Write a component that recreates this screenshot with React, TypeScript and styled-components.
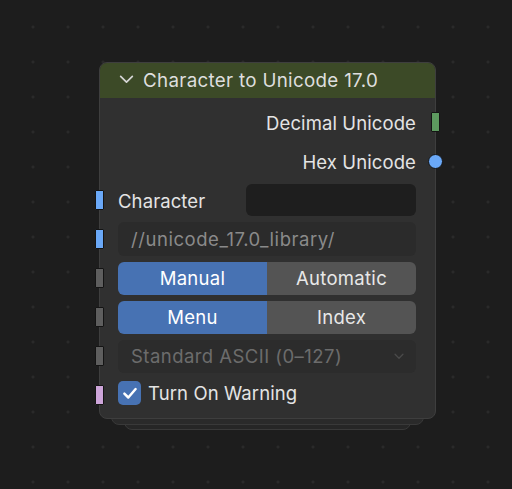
import styled, {createGlobalStyle} from "styled-components";

const GlobalStyle = createGlobalStyle`
    html, body {
        margin: 0;
        padding: 0;
        background: #1d1d1d;
    }
    * {
        box-sizing: border-box;
    }
`;

type SocketKind = 'blue' | 'gray' | 'pink' | 'green';

const socketColors: Record<SocketKind, string> = {
    blue: '#6aa8f7',
    gray: '#5e5e5e',
    pink: '#cda5d9',
    green: '#5d9a5f',
};

export default function App() {
    return (
        <>
            <GlobalStyle/>
            <Canvas>
                <Node>
                    <Header>
                        <Chevron viewBox="0 0 16 16">
                            <path d="M2.5 5 L8 10.5 L13.5 5" fill="none" stroke="#d6d6d6" strokeWidth="1.6"
                                  strokeLinecap="round" strokeLinejoin="round"/>
                        </Chevron>
                        <Title>Character to Unicode 17.0</Title>
                    </Header>
                    <Body>
                        <OutputRow>
                            <Label>Decimal Unicode</Label>
                            <RightSocket $kind="green"/>
                        </OutputRow>
                        <OutputRow>
                            <Label>Hex Unicode</Label>
                            <RoundSocket/>
                        </OutputRow>
                        <Row>
                            <LeftSocket $kind="blue"/>
                            <Label>Character</Label>
                            <TextInput/>
                        </Row>
                        <Row>
                            <LeftSocket $kind="blue"/>
                            <PathField>//unicode_17.0_library/</PathField>
                        </Row>
                        <Row>
                            <LeftSocket $kind="gray"/>
                            <Segmented>
                                <Segment $active>Manual</Segment>
                                <Segment>Automatic</Segment>
                            </Segmented>
                        </Row>
                        <Row>
                            <LeftSocket $kind="gray"/>
                            <Segmented>
                                <Segment $active>Menu</Segment>
                                <Segment>Index</Segment>
                            </Segmented>
                        </Row>
                        <Row>
                            <LeftSocket $kind="gray"/>
                            <Dropdown>
                                <span>Standard ASCII (0–127)</span>
                                <svg width="14" height="14" viewBox="0 0 16 16">
                                    <path d="M3.5 6 L8 10.5 L12.5 6" fill="none" stroke="#4a4a4a" strokeWidth="1.5"
                                          strokeLinecap="round" strokeLinejoin="round"/>
                                </svg>
                            </Dropdown>
                        </Row>
                        <Row>
                            <LeftSocket $kind="pink"/>
                            <Checkbox>
                                <svg width="18" height="18" viewBox="0 0 16 16">
                                    <path d="M3 8.5 L6.5 12 L13 4.5" fill="none" stroke="#ffffff" strokeWidth="2.2"
                                          strokeLinecap="round" strokeLinejoin="round"/>
                                </svg>
                            </Checkbox>
                            <CheckLabel>Turn On Warning</CheckLabel>
                        </Row>
                    </Body>
                </Node>
            </Canvas>
        </>
    );
}

const Canvas = styled.div`
    position: relative;
    z-index: 0;
    width: 512px;
    height: 489px;
    overflow: hidden;
    padding: 62px 0 0 99px;
    background-color: #1d1d1d;
    background-image: radial-gradient(circle, #2f2f2f 1px, transparent 1.4px);
    background-size: 35px 35px;
    background-position: 15.5px 9.5px;
    font-family: Inter, "Noto Sans", sans-serif;
    font-size: 18.5px;
    letter-spacing: 0.1px;
`;

const Node = styled.div`
    position: relative;
    width: 337px;
    border: 1px solid #3e3e3e;
    border-radius: 8px;
    background: #303030;

    &::before, &::after {
        content: '';
        position: absolute;
        z-index: -1;
        background: #2a2a2a;
        border: 1px solid #393939;
        border-radius: 8px;
    }

    &::before {
        left: 11px;
        right: 11px;
        top: 20px;
        bottom: -7px;
    }

    &::after {
        left: 24px;
        right: 24px;
        top: 20px;
        bottom: -12px;
        z-index: -2;
        background: #262626;
    }
`;

const Header = styled.div`
    height: 35px;
    display: flex;
    align-items: center;
    gap: 8px;
    padding-left: 18px;
    background: #3c4a27;
    border-radius: 7px 7px 0 0;
`;

const Chevron = styled.svg`
    width: 17px;
    height: 17px;
    margin-top: -2px;
`;

const Title = styled.span`
    color: #dedede;
    font-size: 18.8px;
    letter-spacing: 0.3px;
`;

const Body = styled.div`
    display: flex;
    flex-direction: column;
    gap: 6px;
    padding: 8px 19px 6px 18px;
`;

const Row = styled.div`
    position: relative;
    height: 33px;
    display: flex;
    align-items: center;
`;

const OutputRow = styled(Row)`
    justify-content: flex-end;
`;

const Label = styled.span`
    color: #e4e4e4;
    flex: 1;
    white-space: nowrap;

    ${OutputRow} & {
        flex: none;
    }
`;

const LeftSocket = styled.div<{$kind: SocketKind}>`
    position: absolute;
    left: -23px;
    top: 6px;
    width: 9px;
    height: 20px;
    border: 1px solid #141414;
    border-radius: 1px;
    background: ${p => socketColors[p.$kind]};
`;

const RightSocket = styled(LeftSocket)`
    left: auto;
    right: -24px;
`;

const RoundSocket = styled.div`
    position: absolute;
    right: -27px;
    top: 9px;
    width: 15px;
    height: 15px;
    border-radius: 50%;
    border: 1px solid #141414;
    background: #6aa8f7;
`;

const TextInput = styled.div`
    width: 170px;
    height: 32px;
    margin-top: -1px;
    border-radius: 6px;
    background: #1e1e1e;
`;

const PathField = styled.div`
    flex: 1;
    height: 34px;
    margin-top: -1px;
    display: flex;
    align-items: center;
    padding-left: 13px;
    border-radius: 6px;
    background: #2b2b2b;
    color: #8a8a8a;
    letter-spacing: 0.55px;
`;

const Segmented = styled.div`
    flex: 1;
    height: 33px;
    margin-top: -1px;
    display: flex;
    border-radius: 6px;
    overflow: hidden;
`;

const Segment = styled.div<{$active?: boolean}>`
    flex: 1;
    display: flex;
    align-items: center;
    justify-content: center;
    background: ${p => p.$active ? '#4772b3' : '#545454'};
    color: ${p => p.$active ? '#ffffff' : '#e8e8e8'};
    letter-spacing: 0.3px;
`;

const Dropdown = styled.div`
    flex: 1;
    height: 33px;
    margin-top: -1px;
    display: flex;
    align-items: center;
    justify-content: space-between;
    padding: 0 10px 0 13px;
    border-radius: 6px;
    background: #2c2c2c;
    color: #6c6c6c;
    letter-spacing: 0.45px;
`;

const Checkbox = styled.div`
    width: 23px;
    height: 24px;
    margin-top: -5px;
    display: flex;
    align-items: center;
    justify-content: center;
    border-radius: 5px;
    background: #4772b3;
`;

const CheckLabel = styled.span`
    margin-left: 7px;
    margin-top: -5px;
    color: #e4e4e4;
`;
